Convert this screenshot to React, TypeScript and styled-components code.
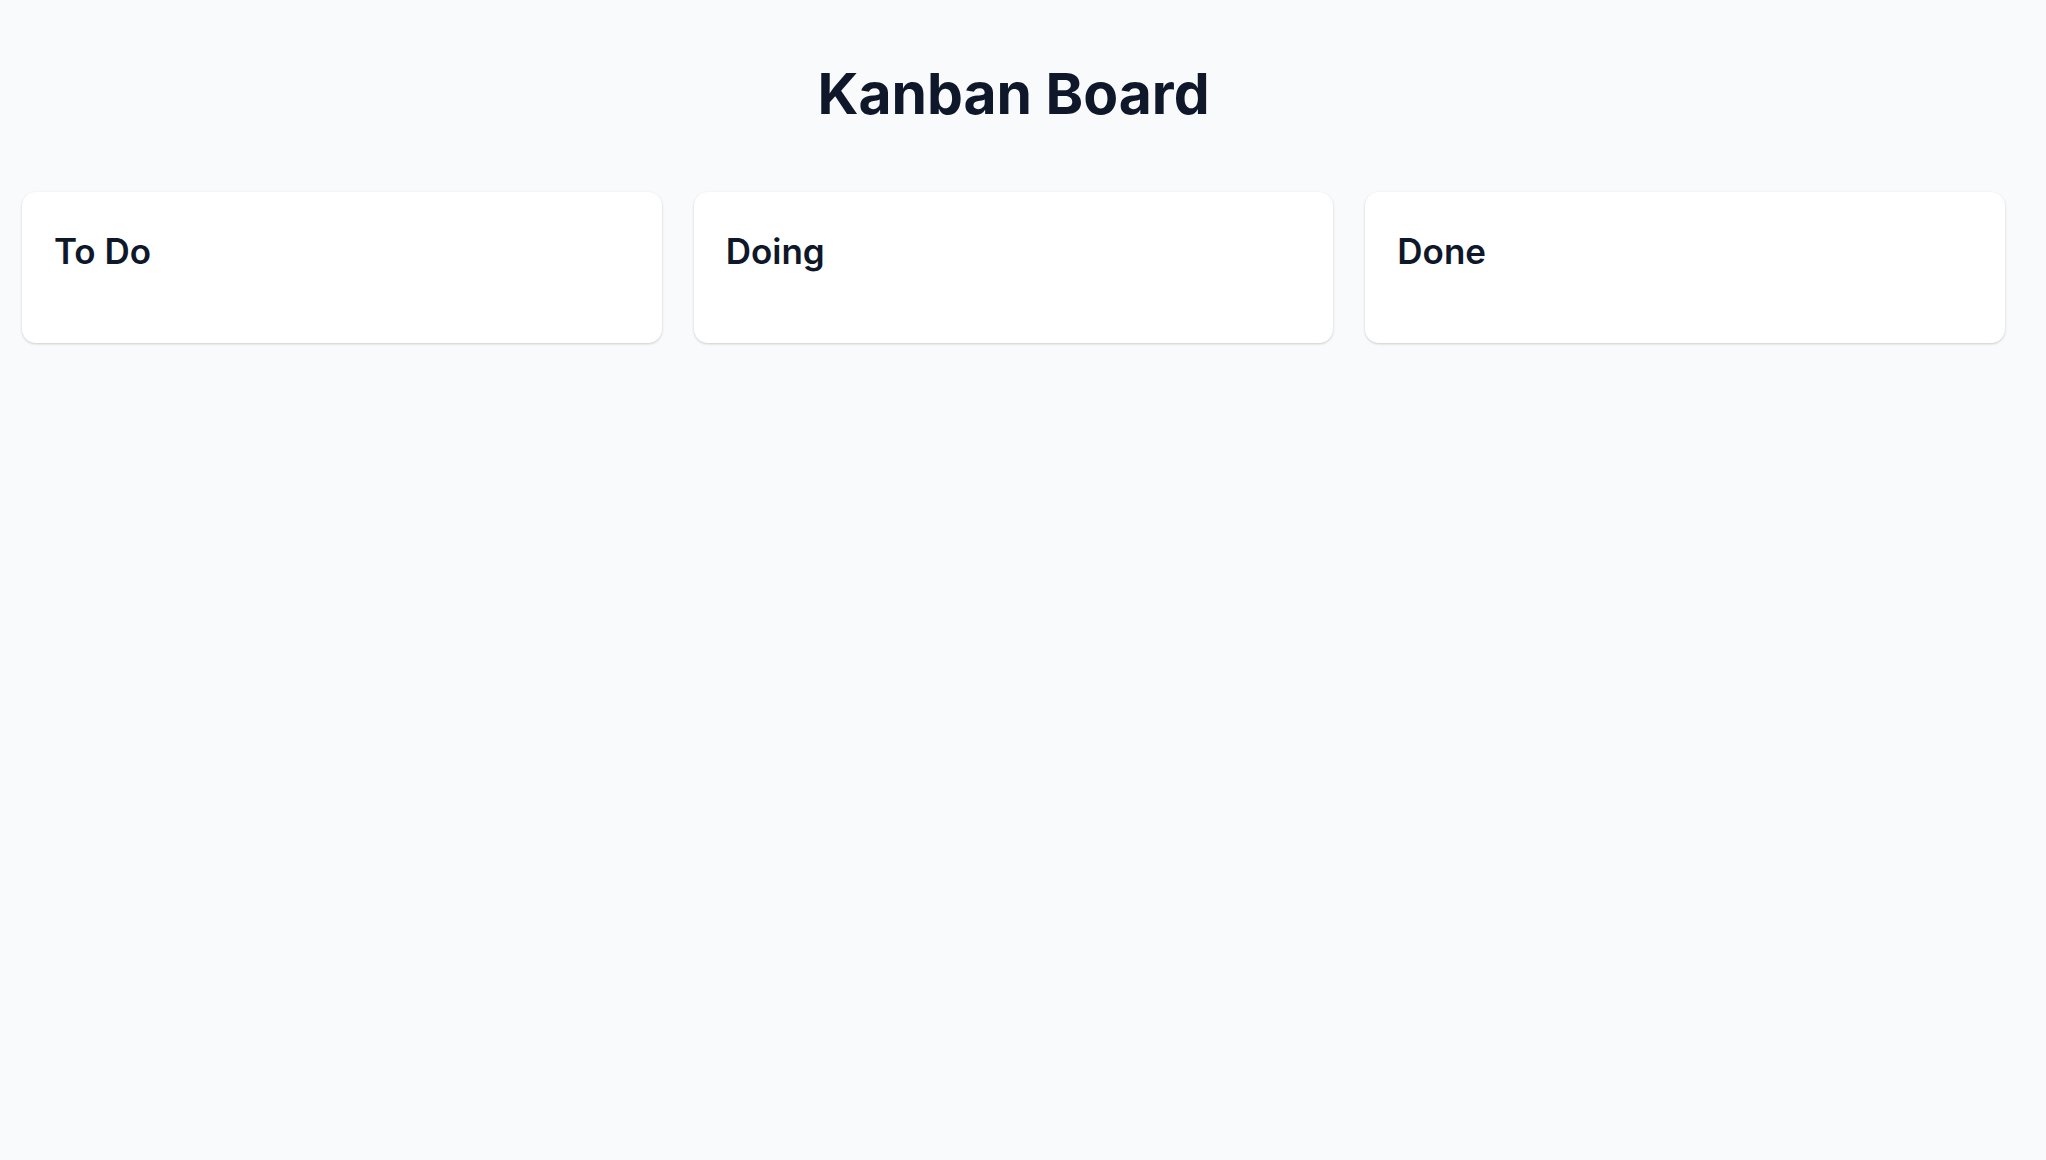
import styled, { createGlobalStyle } from "styled-components";

const GlobalStyle = createGlobalStyle`
  html, body {
    margin: 0;
    padding: 0;
    background: #f8fafc;
  }

  body {
    font-family: Inter, "Noto Sans", "Liberation Sans", sans-serif;
    color: #0f172a;
  }
`;

const Page = styled.div`
  min-height: 1160px;
  box-sizing: border-box;
  padding: 60px 41px 0 22px;
`;

const Title = styled.h1`
  margin: 0 0 64px;
  font-size: 57px;
  line-height: 68px;
  font-weight: 700;
  text-align: center;
  color: #0f172a;
`;

const Board = styled.div`
  display: grid;
  grid-template-columns: repeat(3, 1fr);
  gap: 32px;
`;

const Column = styled.section`
  background: #ffffff;
  border-radius: 14px;
  padding: 38px 32px 33px;
  box-shadow: 0 1px 3px rgba(15, 23, 42, 0.12), 0 1px 2px rgba(15, 23, 42, 0.08);
`;

const ColumnTitle = styled.h2`
  margin: 0;
  font-size: 35px;
  line-height: 42px;
  font-weight: 600;
  color: #0f172a;
`;

const TaskList = styled.div`
  margin-top: 16px;
  min-height: 22px;
  display: flex;
  flex-direction: column;
  gap: 12px;
`;

const columns = ["To Do", "Doing", "Done"];

export default function App() {
  return (
    <>
      <GlobalStyle />
      <Page>
        <Title>Kanban Board</Title>
        <Board>
          {columns.map((name) => (
            <Column key={name}>
              <ColumnTitle>{name}</ColumnTitle>
              <TaskList />
            </Column>
          ))}
        </Board>
      </Page>
    </>
  );
}
